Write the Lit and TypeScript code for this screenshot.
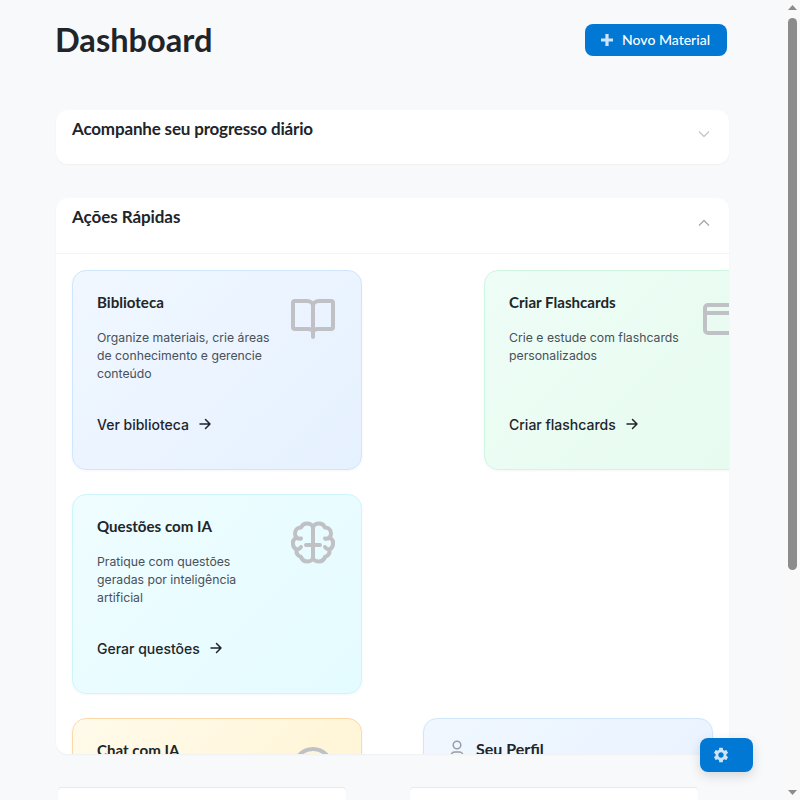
import { LitElement, html, css, svg } from 'lit';
import { customElement } from 'lit/decorators.js';

const book = svg`<path d="M23 10V41M23 10c0-3 3-5 6-5h12a2 2 0 0 1 2 2v24a2 2 0 0 1-2 2H28c-3 0-5 1-5 3.500M23 10c0-3-3-5-6-5H5a2 2 0 0 0-2 2v24a2 2 0 0 0 2 2h13c3 0 5 1 5 3.500"/>`;
const cards = svg`<rect x="3" y="9" width="44" height="28" rx="3"/><path d="M3 17h44"/>`;
const brainHalf = svg`<path d="M23 8C23 5 20 3.500 17 3.500 14 3.500 12 5 11 7.500 7.500 7.500 5 10 5 13.500 5 15 5.500 16.500 6.500 17.500 4 19 2.500 21.500 3 24 3 26.500 4.500 28.500 6.500 29.500 6 33.500 8 36 11 37 12 40 15 41.500 17.500 41.500 20.500 41.500 23 39.500 23 37"/><path d="M23 25h-7M6.500 17.500c1.500 1 3 1.500 4.500 1M6.500 29.500c2 0 3.500-1 4.500-2.500"/>`;
const brain = svg`${brainHalf}<g transform="translate(46 0) scale(-1 1)">${brainHalf}</g><path d="M23 8v29"/>`;
const chat = svg`<circle cx="23" cy="24" r="19"/>`;

const arrow = html`<svg class="arrow" viewBox="0 0 16 16"><path d="M3 8h10M8.500 3.500 13 8l-4.500 4.500"/></svg>`;

interface Action {
  title: string;
  text: string;
  link: string;
  tone: string;
  icon: unknown;
}

const actions: Action[] = [
  { title: 'Biblioteca', text: 'Organize materiais, crie áreas de conhecimento e gerencie conteúdo', link: 'Ver biblioteca', tone: 'blue', icon: book },
  { title: 'Criar Flashcards', text: 'Crie e estude com flashcards personalizados', link: 'Criar flashcards', tone: 'green', icon: cards },
  { title: 'Questões com IA', text: 'Pratique com questões geradas por inteligência artificial', link: 'Gerar questões', tone: 'cyan', icon: brain },
];

@customElement('app-root')
export class AppRoot extends LitElement {
  static styles = css`
    :host {
      display: block;
      min-height: 1107px;
      box-sizing: border-box;
      padding: 24px 71px 0 56px;
      background: #f8f9fb;
      color: #212529;
      font-family: Inter, sans-serif;
    }

    .header {
      display: flex;
      justify-content: space-between;
      align-items: center;
      height: 32px;
      margin-right: 2px;
      margin-bottom: 54px;
    }

    h1 {
      margin: 0 0 0 -1px;
      font: 700 32.600px/32px Lato, sans-serif;
    }

    .primary {
      display: flex;
      align-items: center;
      gap: 8px;
      height: 32px;
      padding: 0 17px 1px 15px;
      box-sizing: border-box;
      border: 0;
      border-radius: 8px;
      background: #0078d4;
      color: #fff;
      font: 500 14px Lato, sans-serif;
    }

    .primary svg {
      width: 14px;
      height: 14px;
      fill: none;
      stroke: #cfe4f6;
      stroke-width: 3.200;
    }

    .panel {
      background: #fff;
      border-radius: 12px;
      box-shadow: 0 1px 2px rgba(0, 0, 0, 0.04);
      margin-bottom: 34px;
      overflow: hidden;
    }

    .panel-head {
      display: flex;
      justify-content: space-between;
      align-items: flex-start;
      box-sizing: border-box;
      padding: 8px 19px 0 16px;
    }

    .panel-head h2 {
      margin: 0;
      font: 700 17px/21px Lato, sans-serif;
      letter-spacing: -0.07px;
    }

    .progress .panel-head {
      height: 54px;
    }

    .progress .panel-head h2 {
      letter-spacing: -0.17px;
    }

    .actions {
      height: 556px;
    }

    .actions .panel-head {
      height: 56px;
      border-bottom: 1px solid #f2f3f5;
    }

    .chevron {
      width: 12px;
      height: 12px;
      margin-top: 10px;
      fill: none;
      stroke: #c4c7cc;
      stroke-width: 1.300;
    }

    .actions .chevron {
      margin-top: 11px;
      stroke: #a5a8ae;
    }

    .body {
      padding: 16px;
    }

    .grid {
      display: grid;
      grid-template-columns: repeat(2, 290px);
      gap: 24px 122px;
      margin-bottom: 24px;
    }

    .grid.wide {
      width: 641px;
      justify-content: space-between;
      column-gap: 0;
    }

    .card {
      display: flex;
      flex-direction: column;
      box-sizing: border-box;
      height: 200px;
      padding: 22px 24px 24px;
      border: 1px solid;
      border-radius: 14px;
      box-shadow: 0 1px 3px rgba(0, 0, 0, 0.04);
    }

    .blue {
      background: linear-gradient(135deg, #f0f7ff, #e6f1ff);
      border-color: #cfe6fc;
    }

    .green {
      background: linear-gradient(135deg, #eefdf6, #e6fbef);
      border-color: #cff6e3;
    }

    .cyan {
      background: linear-gradient(135deg, #effdff, #e4fbff);
      border-color: #cdf5fc;
    }

    .yellow {
      background: linear-gradient(135deg, #fffaeb, #fff3cc);
      border-color: #fdd8a8;
    }

    .top {
      display: flex;
      justify-content: space-between;
      flex: 1;
    }

    .card h3 {
      margin: 0 0 18px;
      font: 700 15.100px/18px Lato, sans-serif;
    }

    .card p {
      margin: 0;
      width: 180px;
      color: #495057;
      font-size: 12.250px;
      line-height: 18px;
    }

    .big {
      flex: none;
      width: 46px;
      height: 46px;
      margin: 3px 1px 0 0;
      fill: none;
      stroke: #bfc1c5;
      stroke-width: 4;
      stroke-linecap: round;
      stroke-linejoin: round;
      overflow: visible;
    }

    .link {
      display: flex;
      align-items: center;
      gap: 8px;
      height: 24px;
      margin-bottom: 9px;
      font-size: 14px;
      font-weight: 500;
    }

    .arrow {
      width: 16px;
      height: 16px;
      fill: none;
      stroke: #212529;
      stroke-width: 1.500;
      stroke-linecap: round;
      stroke-linejoin: round;
    }

    .profile-head {
      display: flex;
      align-items: center;
      gap: 10px;
      margin-top: -1px;
    }

    .card .profile-head h3 {
      margin: 0;
      font-size: 16px;
    }

    .user {
      width: 18px;
      height: 18px;
      fill: none;
      stroke: #9a9da3;
      stroke-width: 1.500;
      overflow: visible;
    }

    .stats {
      display: grid;
      grid-template-columns: repeat(2, 288px);
      column-gap: 64px;
      margin-left: 2px;
    }

    .stat {
      height: 300px;
      background: #fff;
      border-radius: 4px;
      box-shadow: 0 -1px 1px rgba(0, 0, 0, 0.07);
    }

    .fab {
      position: fixed;
      left: 700px;
      top: 738px;
      width: 53px;
      height: 34px;
      display: flex;
      align-items: center;
      padding: 0 0 0 12px;
      box-sizing: border-box;
      border: 0;
      border-radius: 8px;
      background: #0078d4;
      box-shadow: 0 4px 12px rgba(0, 0, 0, 0.14);
    }

    .fab svg {
      width: 18px;
      height: 18px;
      fill: #cfe4f6;
    }

    .scrollbar {
      position: fixed;
      top: 0;
      right: 0;
      bottom: 0;
      width: 15px;
      display: flex;
      flex-direction: column;
      align-items: center;
      background: #f9f9f9;
    }

    .scroll-arrow {
      flex: none;
      width: 9px;
      height: 18px;
      fill: #8c8c8c;
    }

    .thumb {
      flex: none;
      width: 9px;
      height: 552px;
      border-radius: 5px;
      background: #8c8c8c;
    }

    .spacer {
      flex: 1;
    }
  `;

  private renderCard(a: Action) {
    return html`
      <div class="card ${a.tone}">
        <div class="top">
          <div>
            <h3>${a.title}</h3>
            <p>${a.text}</p>
          </div>
          <svg class="big" viewBox="0 0 46 46">${a.icon}</svg>
        </div>
        <div class="link">${a.link} ${arrow}</div>
      </div>
    `;
  }

  render() {
    return html`
      <div class="header">
        <h1>Dashboard</h1>
        <button class="primary">
          <svg viewBox="0 0 14 14"><path d="M7 1v12M1 7h12"/></svg>
          Novo Material
        </button>
      </div>

      <section class="panel progress">
        <div class="panel-head">
          <h2>Acompanhe seu progresso diário</h2>
          <svg class="chevron" viewBox="0 0 12 12"><path d="M1 3.500l5 5 5-5"/></svg>
        </div>
      </section>

      <section class="panel actions">
        <div class="panel-head">
          <h2>Ações Rápidas</h2>
          <svg class="chevron" viewBox="0 0 12 12"><path d="M1 8.500l5-5 5 5"/></svg>
        </div>
        <div class="body">
          <div class="grid">${actions.map((a) => this.renderCard(a))}</div>
          <div class="grid wide">
            ${this.renderCard({ title: 'Chat com IA', text: 'Tire dúvidas e converse com o assistente', link: 'Iniciar chat', tone: 'yellow', icon: chat })}
            <div class="card blue">
              <div class="profile-head">
                <svg class="user" viewBox="0 0 18 18"><circle cx="9" cy="5" r="3.800"/><path d="M2.800 19v-3a4 4 0 0 1 4-4h4.400a4 4 0 0 1 4 4v3"/></svg>
                <h3>Seu Perfil</h3>
              </div>
            </div>
          </div>
        </div>
      </section>

      <div class="stats">
        <div class="stat"></div>
        <div class="stat"></div>
      </div>

      <button class="fab" aria-label="Configurações">
        <svg viewBox="0 0 24 24"><path d="M19.140 12.940c.04-.3.06-.61.06-.94 0-.32-.02-.64-.07-.94l2.030-1.580c.18-.14.23-.41.12-.61l-1.920-3.320c-.12-.22-.37-.29-.59-.22l-2.390.96c-.5-.38-1.030-.7-1.620-.94l-.36-2.540c-.04-.24-.24-.41-.48-.41h-3.840c-.24 0-.43.17-.47.41l-.36 2.540c-.59.24-1.130.57-1.620.94l-2.390-.96c-.22-.08-.47 0-.59.22L2.740 8.870c-.12.21-.08.47.12.61l2.030 1.580c-.05.3-.09.63-.09.94s.02.64.07.94l-2.030 1.580c-.18.14-.23.41-.12.61l1.920 3.320c.12.22.37.29.59.22l2.390-.96c.5.38 1.030.7 1.620.94l.36 2.540c.05.24.24.41.48.41h3.840c.24 0 .44-.17.47-.41l.36-2.540c.59-.24 1.130-.56 1.620-.94l2.390.96c.22.08.47 0 .59-.22l1.920-3.320c.12-.22.07-.47-.12-.61l-2.010-1.580zM12 15.600c-1.980 0-3.600-1.620-3.600-3.600s1.620-3.600 3.600-3.600 3.600 1.620 3.600 3.600-1.620 3.600-3.600 3.600z"/></svg>
      </button>

      <div class="scrollbar">
        <svg class="scroll-arrow" viewBox="0 0 9 18"><path d="M4.500 5 9 10H0z"/></svg>
        <div class="thumb"></div>
        <div class="spacer"></div>
        <svg class="scroll-arrow" viewBox="0 0 9 18"><path d="M4.500 13 0 8h9z"/></svg>
      </div>
    `;
  }
}
